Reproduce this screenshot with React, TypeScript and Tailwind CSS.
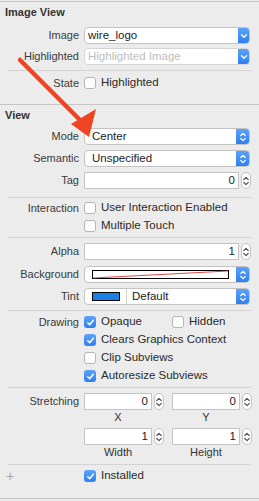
import React from 'react';

const font = { fontFamily: '"Liberation Sans", Arial, sans-serif' };

function Chevrons({ color = '#ffffff', single = false }: { color?: string; single?: boolean }) {
  if (single) {
    return (
      <svg width="8" height="6" viewBox="0 0 8 6">
        <path d="M1.5 1.8 L4 4.2 L6.5 1.8" fill="none" stroke={color} strokeWidth="1.3" strokeLinecap="round" strokeLinejoin="round" />
      </svg>
    );
  }
  return (
    <svg width="8" height="12" viewBox="0 0 8 12">
      <path d="M1.8 4.5 L4 2.3 L6.2 4.5" fill="none" stroke={color} strokeWidth="1.2" strokeLinecap="round" strokeLinejoin="round" />
      <path d="M1.8 7.5 L4 9.7 L6.2 7.5" fill="none" stroke={color} strokeWidth="1.2" strokeLinecap="round" strokeLinejoin="round" />
    </svg>
  );
}

function Label({ children }: { children: React.ReactNode }) {
  return <div className="w-[79px] shrink-0 text-right text-[11px] text-[#3a3a3a] leading-none">{children}</div>;
}

function Popup({ children, single = false, className = '' }: { children: React.ReactNode; single?: boolean; className?: string }) {
  return (
    <div className={`ml-[5px] flex h-[17px] w-[166px] overflow-hidden rounded-[4px] border border-[#c3c3c3] bg-white ${className}`}>
      <div className="flex min-w-0 flex-1 items-center">{children}</div>
      <div className={`flex items-center justify-center bg-gradient-to-b from-[#5aa2f9] to-[#2f7ff0] ${single ? 'w-[11px]' : 'w-[13px]'}`}>
        <Chevrons single={single} />
      </div>
    </div>
  );
}

function Stepper() {
  return (
    <div className="flex h-[17px] w-[10px] items-center justify-center rounded-[5px] border border-[#c3c3c3] bg-white">
      <Chevrons color="#555555" />
    </div>
  );
}

function NumField({ value, width }: { value: string; width: string }) {
  return (
    <div className="flex items-center gap-[2px]">
      <div className={`flex h-[17px] ${width} items-center justify-end border border-[#c3c3c3] bg-white pr-[3px] text-[11.5px] text-[#222]`}>
        {value}
      </div>
      <Stepper />
    </div>
  );
}

function Check({ on }: { on: boolean }) {
  if (on) {
    return (
      <div className="flex h-[12px] w-[12px] shrink-0 items-center justify-center rounded-[3px] bg-gradient-to-b from-[#5ba3fa] to-[#2f7ff0]">
        <svg width="9" height="9" viewBox="0 0 9 9">
          <path d="M1.8 4.8 L3.7 6.7 L7.3 2.2" fill="none" stroke="#fff" strokeWidth="1.5" strokeLinecap="round" strokeLinejoin="round" />
        </svg>
      </div>
    );
  }
  return <div className="h-[12px] w-[12px] shrink-0 rounded-[3px] border border-[#b5b5b5] bg-white" />;
}

function CheckItem({ on, text }: { on: boolean; text: string }) {
  return (
    <div className="flex items-center">
      <Check on={on} />
      <span className="ml-[5px] text-[11.5px] text-[#2a2a2a] leading-none">{text}</span>
    </div>
  );
}

function Sep({ className = '' }: { className?: string }) {
  return <div className={`mx-[8px] h-px bg-[#d3d3d3] ${className}`} />;
}

function Header({ text }: { text: string }) {
  return <div className="flex h-[20px] items-center pl-[5px] text-[11px] font-bold text-[#333]">{text}</div>;
}

export default function App() {
  return (
    <div className="relative h-[501px] w-[259px] overflow-hidden bg-[#ececec]" style={font}>
      <div className="mt-[1px] h-px bg-[#c6c6c6]" />

      <Header text="Image View" />
      <div className="mt-[5px] flex items-center">
        <Label>Image</Label>
        <Popup single>
          <span className="pl-[3px] text-[11.5px] text-[#222]">wire_logo</span>
        </Popup>
      </div>
      <div className="mt-[4px] flex items-center">
        <Label>Highlighted</Label>
        <Popup single className="border-[#d5d5d5]">
          <span className="pl-[3px] text-[11.5px] text-[#bdbdbd]">Highlighted Image</span>
        </Popup>
      </div>
      <Sep className="mt-[5px]" />
      <div className="mt-[6px] flex h-[12px] items-center">
        <Label>State</Label>
        <div className="ml-[5px]">
          <CheckItem on={false} text="Highlighted" />
        </div>
      </div>

      <div className="mt-[15px] h-px bg-[#c6c6c6]" />
      <Header text="View" />
      <div className="mt-[3px] flex items-center">
        <Label>Mode</Label>
        <Popup>
          <span className="pl-[7px] text-[11.5px] text-[#222]">Center</span>
        </Popup>
      </div>
      <div className="mt-[5px] flex items-center">
        <Label>Semantic</Label>
        <Popup>
          <span className="pl-[7px] text-[11.5px] text-[#222]">Unspecified</span>
        </Popup>
      </div>
      <div className="mt-[5px] flex items-center">
        <Label>Tag</Label>
        <div className="ml-[5px]">
          <NumField value="0" width="w-[155px]" />
        </div>
      </div>
      <Sep className="mt-[8px]" />
      <div className="mt-[4px] flex h-[12px] items-center">
        <Label>Interaction</Label>
        <div className="ml-[5px]">
          <CheckItem on={false} text="User Interaction Enabled" />
        </div>
      </div>
      <div className="mt-[6px] flex h-[12px] items-center pl-[84px]">
        <CheckItem on={false} text="Multiple Touch" />
      </div>
      <Sep className="mt-[5px]" />
      <div className="mt-[5px] flex items-center">
        <Label>Alpha</Label>
        <div className="ml-[5px]">
          <NumField value="1" width="w-[155px]" />
        </div>
      </div>
      <div className="mt-[6px] flex items-center">
        <Label>Background</Label>
        <Popup>
          <svg className="ml-[7px]" width="137" height="9" viewBox="0 0 137 9">
            <rect x="0.5" y="0.5" width="136" height="8" fill="#fff" stroke="#000" />
            <line x1="1" y1="8" x2="136" y2="1" stroke="#d33" strokeWidth="0.9" />
          </svg>
        </Popup>
      </div>
      <div className="mt-[5px] flex items-center">
        <Label>Tint</Label>
        <Popup>
          <div className="ml-[7px] h-[9px] w-[28px] border border-black bg-[#1b7fe3]" />
          <div className="ml-[6px] h-full w-px bg-[#d0d0d0]" />
          <span className="pl-[5px] text-[11.5px] text-[#222]">Default</span>
        </Popup>
      </div>
      <Sep className="mt-[5px]" />
      <div className="mt-[5px] flex h-[12px] items-center">
        <Label>Drawing</Label>
        <div className="ml-[5px] w-[88px]">
          <CheckItem on text="Opaque" />
        </div>
        <CheckItem on={false} text="Hidden" />
      </div>
      <div className="mt-[6px] flex h-[12px] items-center pl-[84px]">
        <CheckItem on text="Clears Graphics Context" />
      </div>
      <div className="mt-[6px] flex h-[12px] items-center pl-[84px]">
        <CheckItem on={false} text="Clip Subviews" />
      </div>
      <div className="mt-[6px] flex h-[12px] items-center pl-[84px]">
        <CheckItem on text="Autoresize Subviews" />
      </div>
      <Sep className="mt-[5px]" />
      <div className="mt-[5px] flex items-center">
        <Label>Stretching</Label>
        <div className="ml-[5px] flex gap-[8px]">
          <NumField value="0" width="w-[68px]" />
          <NumField value="0" width="w-[68px]" />
        </div>
      </div>
      <div className="mt-[1px] flex h-[12px] items-center pl-[84px] text-[11px] text-[#333]">
        <div className="w-[68px] text-center">X</div>
        <div className="ml-[20px] w-[68px] text-center">Y</div>
      </div>
      <div className="mt-[5px] flex items-center pl-[84px]">
        <div className="flex gap-[8px]">
          <NumField value="1" width="w-[68px]" />
          <NumField value="1" width="w-[68px]" />
        </div>
      </div>
      <div className="mt-[1px] flex h-[12px] items-center pl-[84px] text-[11px] text-[#333]">
        <div className="w-[68px] text-center">Width</div>
        <div className="ml-[20px] w-[68px] text-center">Height</div>
      </div>
      <Sep className="mt-[6px]" />
      <div className="mt-[5px] flex h-[12px] items-center">
        <div className="w-[84px] pl-[6px] text-[14px] font-light text-[#a8a8a8] leading-none">+</div>
        <CheckItem on text="Installed" />
      </div>
      <div className="mt-[16px] h-px bg-[#c6c6c6]" />

      <svg className="pointer-events-none absolute left-0 top-0" width="259" height="501" viewBox="0 0 259 501">
        <line x1="20" y1="60" x2="80" y2="120" stroke="#ee4423" strokeWidth="4.5" strokeLinecap="round" />
        <polygon points="71,124 96,109 89,137" fill="#ee4423" />
      </svg>
    </div>
  );
}
